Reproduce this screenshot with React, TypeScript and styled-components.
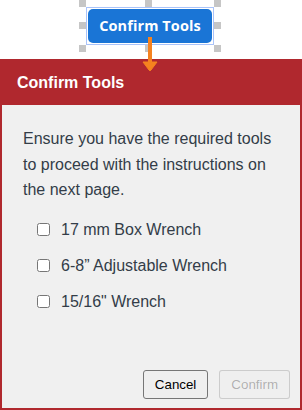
import { useState } from 'react'
import styled, { createGlobalStyle } from 'styled-components'

const TOOLS = ['17 mm Box Wrench', '6-8” Adjustable Wrench', '15/16" Wrench']

const HANDLES: { x: 'l' | 'c' | 'r'; y: 't' | 'm' | 'b' }[] = [
  { x: 'l', y: 't' },
  { x: 'c', y: 't' },
  { x: 'r', y: 't' },
  { x: 'l', y: 'm' },
  { x: 'r', y: 'm' },
  { x: 'l', y: 'b' },
  { x: 'c', y: 'b' },
  { x: 'r', y: 'b' }
]

export default function App() {
  const [checked, setChecked] = useState<boolean[]>(TOOLS.map(() => false))
  const allChecked = checked.every(Boolean)

  const toggle = (index: number) => {
    setChecked((prev) => prev.map((value, i) => (i === index ? !value : value)))
  }

  return (
    <>
      <GlobalStyle />
      <Page>
        <Stage>
          <Selection>
            {HANDLES.map((h) => (
              <Handle key={`${h.x}${h.y}`} $x={h.x} $y={h.y} />
            ))}
            <TriggerButton>Confirm Tools</TriggerButton>
            <Arrow width="16" height="36" viewBox="0 0 16 36">
              <rect x="6" y="0" width="4" height="28" fill="#f5821f" />
              <path d="M1 25 L15 25 L9 33 Q8 34.5 7 33 Z" fill="#f5821f" stroke="#f5821f" strokeWidth="1" strokeLinejoin="round" />
            </Arrow>
          </Selection>
        </Stage>
        <Panel>
          <Header>Confirm Tools</Header>
          <Body>
            <Message>Ensure you have the required tools to proceed with the instructions on the next page.</Message>
            <ToolList>
              {TOOLS.map((tool, i) => (
                <ToolRow key={tool}>
                  <Checkbox type="checkbox" checked={checked[i]} onChange={() => toggle(i)} />
                  {tool}
                </ToolRow>
              ))}
            </ToolList>
            <Footer>
              <ActionButton type="button">Cancel</ActionButton>
              <ActionButton type="button" disabled={!allChecked}>
                Confirm
              </ActionButton>
            </Footer>
          </Body>
        </Panel>
      </Page>
    </>
  )
}

const GlobalStyle = createGlobalStyle`
  html, body {
    margin: 0;
    padding: 0;
    background: #ffffff;
  }
  body {
    font-family: Arial, "Liberation Sans", sans-serif;
  }
`

const Page = styled.div`
  width: 302px;
  height: 410px;
  display: flex;
  flex-direction: column;
  overflow: hidden;
`

const Stage = styled.div`
  height: 59px;
  display: flex;
  justify-content: center;
  align-items: flex-start;
  padding-top: 7px;
  padding-right: 2px;
  box-sizing: border-box;
`

const Selection = styled.div`
  position: relative;
  border: 1px solid #a9c3fa;
  padding: 1px;
  display: flex;
`

const Handle = styled.span<{ $x: 'l' | 'c' | 'r'; $y: 't' | 'm' | 'b' }>`
  position: absolute;
  width: 7px;
  height: 7px;
  background: #c6c6c6;
  ${({ $x }) =>
    $x === 'l' ? 'left: -8px;' : $x === 'r' ? 'right: -8px;' : 'left: calc(50% - 5px);'}
  ${({ $y }) =>
    $y === 't' ? 'top: -8px;' : $y === 'b' ? 'bottom: -8px;' : 'top: calc(50% - 4px);'}
`

const TriggerButton = styled.button`
  width: 124px;
  height: 34px;
  border: none;
  border-radius: 5px;
  background: #1a75d6;
  color: #ffffff;
  font-family: 'Open Sans', Arial, sans-serif;
  font-weight: 700;
  font-size: 14.5px;
  letter-spacing: 0.1px;
  padding: 0 0 1px;
  cursor: pointer;
`

const Arrow = styled.svg`
  position: absolute;
  left: 55px;
  top: 29px;
  z-index: 2;
`

const Panel = styled.div`
  flex: 1;
  display: flex;
  flex-direction: column;
  border: 2px solid #b0282e;
  background: #f0f0f0;
`

const Header = styled.div`
  height: 44px;
  display: flex;
  align-items: center;
  padding-left: 15px;
  margin-top: -2px;
  padding-top: 2px;
  background: #b0282e;
  color: #ffffff;
  font-weight: 700;
  font-size: 16px;
`

const Body = styled.div`
  flex: 1;
  display: flex;
  flex-direction: column;
  padding: 21px 10px 9px 21px;
`

const Message = styled.p`
  margin: 0;
  font-size: 16px;
  line-height: 25.6px;
  color: #333d48;
  padding-right: 8px;
`

const ToolList = styled.div`
  display: flex;
  flex-direction: column;
  margin-top: 9px;
`

const ToolRow = styled.label`
  height: 36px;
  display: flex;
  align-items: center;
  gap: 11px;
  padding-left: 14px;
  font-size: 16px;
  color: #333d48;
  cursor: pointer;
`

const Checkbox = styled.input`
  width: 13px;
  height: 13px;
  margin: 0;
`

const Footer = styled.div`
  margin-top: auto;
  display: flex;
  justify-content: flex-end;
  gap: 11px;
`

const ActionButton = styled.button`
  height: 29px;
  padding: 0 11px;
  border: 1px solid #767676;
  border-radius: 3px;
  background: #efefef;
  color: #000000;
  font-family: Arial, "Liberation Sans", sans-serif;
  font-size: 13.33px;

  &:disabled {
    border-color: rgba(118, 118, 118, 0.3);
    background: rgba(239, 239, 239, 0.3);
    color: rgba(16, 16, 16, 0.3);
  }
`
